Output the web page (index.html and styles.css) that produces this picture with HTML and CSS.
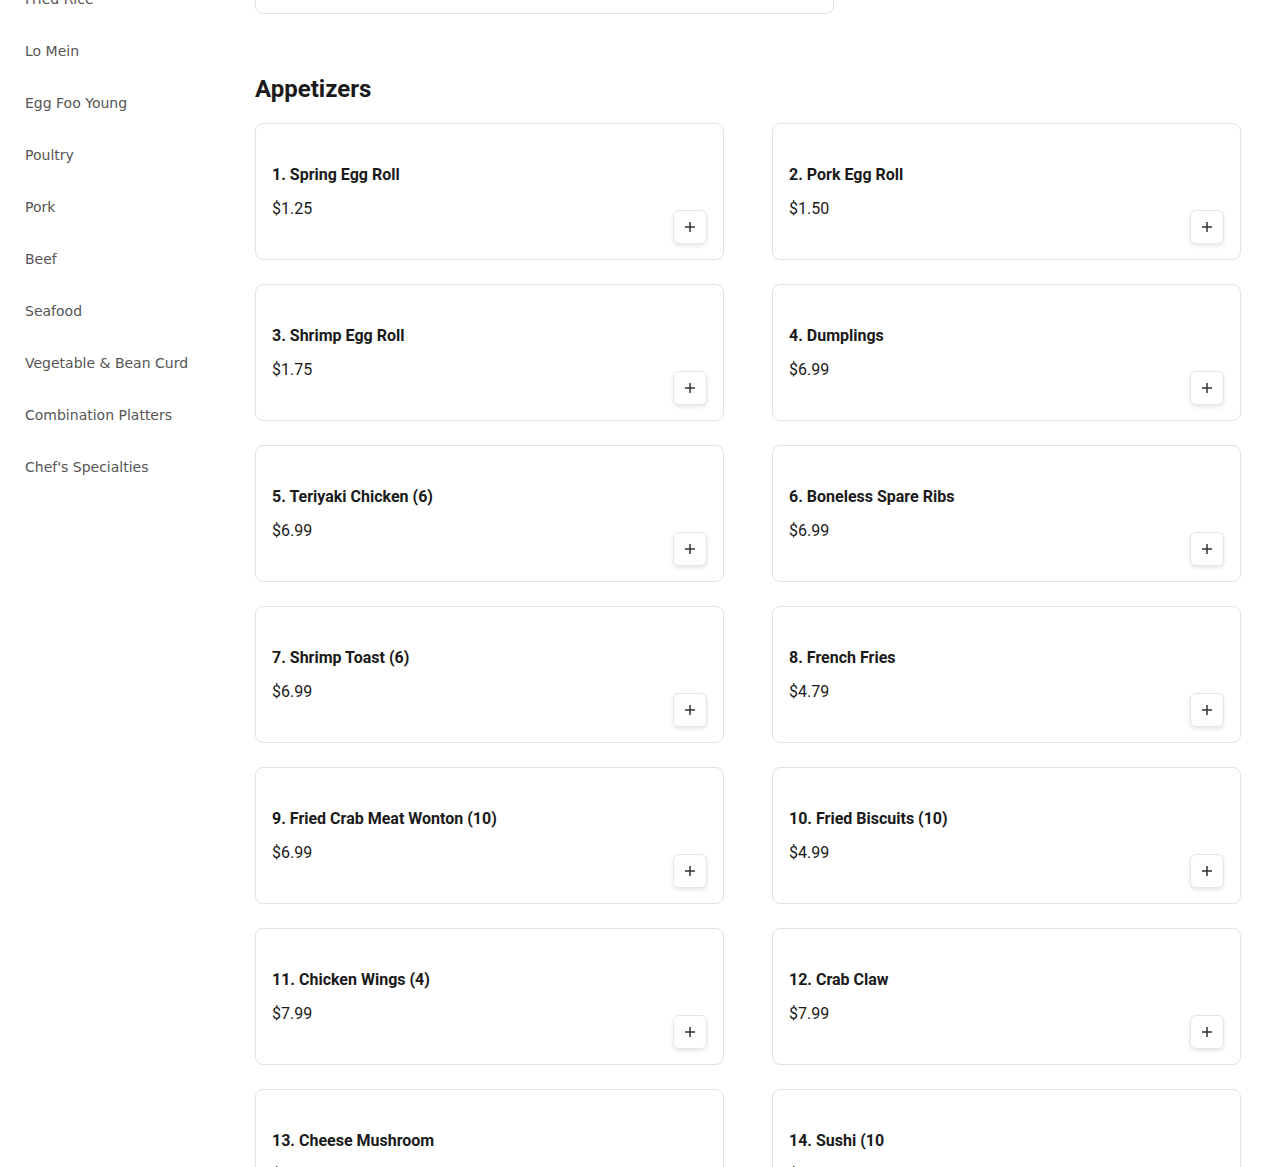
FILE: index.html
```html
<!DOCTYPE html>
<html lang="en">
<head>
    <meta charset="UTF-8">
    <meta name="viewport" content="width=device-width, initial-scale=1.0">
    <title>Menu</title>
    <link rel="stylesheet" href="styles.css">
</head>
<body>
    <div class="page">
        <nav class="sidebar">
            <a href="#">Fried Rice</a>
            <a href="#">Lo Mein</a>
            <a href="#">Egg Foo Young</a>
            <a href="#">Poultry</a>
            <a href="#">Pork</a>
            <a href="#">Beef</a>
            <a href="#">Seafood</a>
            <a href="#">Vegetable &amp; Bean Curd</a>
            <a href="#">Combination Platters</a>
            <a href="#">Chef's Specialties</a>
        </nav>

        <main class="menu">
            <div class="prev-card"></div>

            <section class="section">
                <h2>Appetizers</h2>
                <div class="items" id="items"></div>
            </section>
        </main>
    </div>

    <script>
        const items = [
            ["1. Spring Egg Roll", "$1.25"],
            ["2. Pork Egg Roll", "$1.50"],
            ["3. Shrimp Egg Roll", "$1.75"],
            ["4. Dumplings", "$6.99"],
            ["5. Teriyaki Chicken (6)", "$6.99"],
            ["6. Boneless Spare Ribs", "$6.99"],
            ["7. Shrimp Toast (6)", "$6.99"],
            ["8. French Fries", "$4.79"],
            ["9. Fried Crab Meat Wonton (10)", "$6.99"],
            ["10. Fried Biscuits (10)", "$4.99"],
            ["11. Chicken Wings (4)", "$7.99"],
            ["12. Crab Claw", "$7.99"],
            ["13. Cheese Mushroom", "$6.99"],
            ["14. Sushi (10", "$8.99"]
        ];

        const list = document.getElementById("items");
        items.forEach(([name, price]) => {
            const card = document.createElement("div");
            card.className = "item-card";
            card.innerHTML = `
                <div class="item-info">
                    <h3>${name}</h3>
                    <p class="price">${price}</p>
                </div>
                <button class="add-btn" aria-label="Add">
                    <svg width="12" height="12" viewBox="0 0 12 12"><path d="M6 1v10M1 6h10" stroke="#333" stroke-width="1.5" fill="none"/></svg>
                </button>`;
            list.appendChild(card);
        });
    </script>
</body>
</html>
```

FILE: styles.css
```css
body {
    margin: 0;
    padding: 0;
    background-color: #fff;
    font-family: Roboto, "Liberation Sans", sans-serif;
    color: #1a1a1a;
}

.page {
    display: flex;
    margin-top: -67px;
}

.sidebar {
    width: 230px;
    padding-left: 25px;
    padding-top: 40px;
    display: flex;
    flex-direction: column;
    flex-shrink: 0;
}

.sidebar a {
    font-family: "DejaVu Sans", sans-serif;
    font-size: 14px;
    line-height: 24px;
    padding: 14px 0;
    color: #555;
    text-decoration: none;
}

.menu {
    flex: 1;
    padding-right: 29px;
}

.prev-card {
    width: 579px;
    height: 81px;
    box-sizing: border-box;
    border: 1px solid #e2e2e2;
    border-radius: 8px;
}

.section h2 {
    font-size: 24px;
    line-height: 32px;
    font-weight: 700;
    margin: 59px 0 18px;
    color: #1a1a1a;
}

.items {
    display: grid;
    grid-template-columns: 1fr 1fr;
    column-gap: 48px;
    row-gap: 24px;
}

.item-card {
    display: flex;
    box-sizing: border-box;
    min-height: 137px;
    padding: 16px 16px 15px;
    border: 1px solid #e2e2e2;
    border-radius: 8px;
    background-color: #fff;
}

.item-info {
    flex: 1;
    padding-top: 23px;
}

.item-info h3 {
    margin: 0 0 10px;
    font-size: 16px;
    line-height: 24px;
    font-weight: 700;
    color: #1a1a1a;
}

.price {
    margin: 0;
    font-size: 16px;
    line-height: 24px;
    color: #1a1a1a;
}

.add-btn {
    align-self: flex-end;
    width: 34px;
    height: 34px;
    padding: 0;
    display: flex;
    align-items: center;
    justify-content: center;
    background-color: #fff;
    border: 1px solid #e6e6e6;
    border-radius: 6px;
    box-shadow: 0 2px 4px rgba(0, 0, 0, 0.1);
    cursor: pointer;
}
```
